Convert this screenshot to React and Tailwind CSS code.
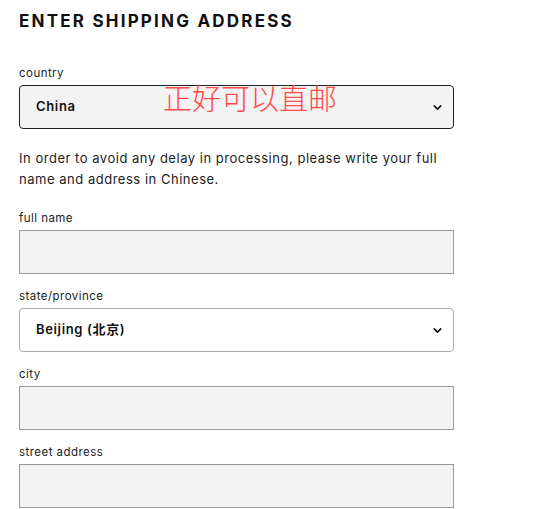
import { ChevronDown } from 'lucide-react'

const font = { fontFamily: "Inter, 'Noto Sans CJK SC', sans-serif" }

function Label({ children }) {
  return <label className="block text-[11.5px] leading-[14px] tracking-[0.04em] text-[#222] mb-[5px]">{children}</label>
}

function TextField({ label }) {
  return (
    <div className="mb-[15px]">
      <Label>{label}</Label>
      <div className="h-[44px] border border-[#999] bg-[#f3f3f3]" />
    </div>
  )
}

function SelectField({ label, value, dark, overlay }) {
  return (
    <div className="mb-[15px]">
      <Label>{label}</Label>
      <div
        className={
          'relative h-[44px] rounded-[4px] border flex items-center justify-between pl-[16px] pr-[9px] ' +
          (dark ? 'border-[#222] bg-[#f3f3f3]' : 'border-[#aaa] bg-white')
        }
      >
        <span className="text-[13px] font-semibold tracking-[0.05em] text-[#111]">{value}</span>
        <ChevronDown size={13} strokeWidth={3} className="text-[#111]" />
        {overlay}
      </div>
    </div>
  )
}

export default function App() {
  return (
    <div className="w-[535px] h-[509px] overflow-hidden bg-white pl-[19px] pt-[11px]" style={font}>
      <div className="w-[435px]">
        <h1 className="text-[17px] leading-[20px] font-bold tracking-[0.13em] text-[#111] mb-[35px]">
          ENTER SHIPPING ADDRESS
        </h1>
        <SelectField
          label="country"
          value="China"
          dark
          overlay={
            <span
              className="absolute left-[143px] top-[-3px] text-[29px] leading-[29px] text-[#ff4b4b] font-light"
              style={{ fontFamily: "'Noto Sans CJK SC', serif" }}
            >
              正好可以直邮
            </span>
          }
        />
        <p className="text-[13px] leading-[21px] tracking-[0.04em] text-[#222] mt-[19px] mb-[21px]">
          In order to avoid any delay in processing, please write your full name and address in Chinese.
        </p>
        <TextField label="full name" />
        <SelectField label="state/province" value="Beijing (北京)" />
        <TextField label="city" />
        <TextField label="street address" />
      </div>
    </div>
  )
}
